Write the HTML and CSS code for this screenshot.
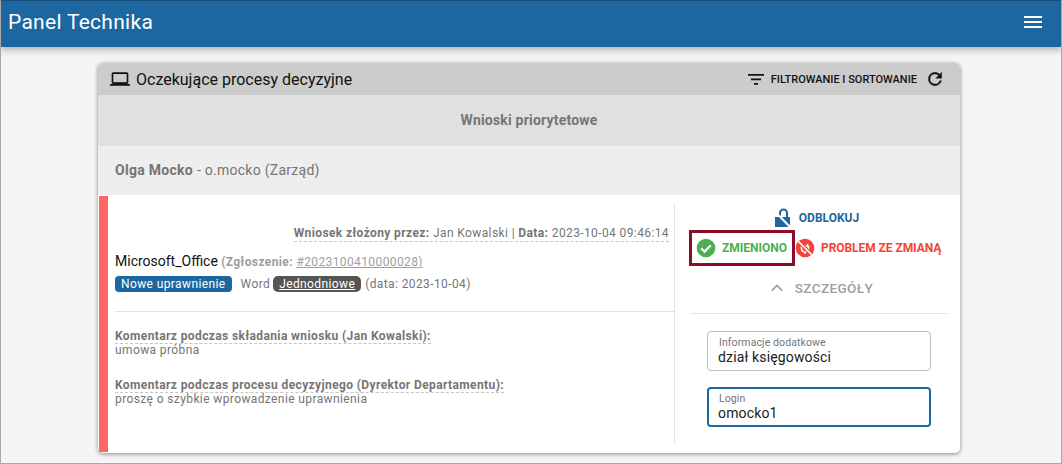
FILE: index.html
```html
<!DOCTYPE html>
<html lang="pl">
<head>
<meta charset="utf-8">
<title>Panel Technika</title>
<link rel="stylesheet" href="styles.css">
</head>
<body>
<div class="page">
  <header class="topbar">
    <span class="brand">Panel Technika</span>
    <svg class="menu" viewBox="0 0 18 12" width="18" height="12"><path d="M0 0h18v2H0zM0 5h18v2H0zM0 10h18v2H0z" fill="#fff"/></svg>
  </header>
  <main class="content">
    <section class="card">
      <div class="card-head">
        <svg class="laptop" viewBox="0 0 24 24" width="20" height="20"><path d="M20 18c1.100 0 2-.9 2-2V6c0-1.100-.9-2-2-2H4c-1.100 0-2 .9-2 2v10c0 1.100.9 2 2 2H0v2h24v-2h-4zM4 6h16v10H4V6z" fill="#111"/></svg>
        <h1 class="card-title">Oczekujące procesy decyzyjne</h1>
        <svg class="filter" viewBox="0 0 16 11" width="16" height="11"><path d="M0 0h16v1.700H0zM3 4.500h10v1.700H3zM6 9h4v1.700H6z" fill="#111"/></svg>
        <span class="filter-label">FILTROWANIE I SORTOWANIE</span>
        <svg class="refresh" viewBox="0 0 24 24" width="20" height="20"><path d="M17.650 6.350A7.960 7.960 0 0 0 12 4a8 8 0 1 0 7.730 10h-2.080A6 6 0 1 1 12 6c1.660 0 3.140.69 4.220 1.780L13 11h7V4l-2.350 2.350z" fill="#111" stroke="#111" stroke-width=".5"/></svg>
      </div>
      <div class="section-head">Wnioski priorytetowe</div>
      <div class="person"><b>Olga Mocko</b> - o.mocko (Zarząd)</div>
      <div class="request">
        <div class="request-main">
          <div class="meta-row"><span class="meta"><b>Wniosek złożony przez:</b> Jan Kowalski | <b>Data:</b> 2023-10-04 09:46:14</span></div>
          <div class="app-row"><span class="app-name">Microsoft_Office</span> <b>(Zgłoszenie:</b> <a class="ticket" href="#">#2023100410000028)</a></div>
          <div class="tags-row">
            <span class="tag tag-blue">Nowe uprawnienie</span>
            <span class="tag-word">Word</span>
            <span class="tag tag-dark"><u>Jednodniowe</u></span>
            <span class="tag-date">(data: 2023-10-04)</span>
          </div>
          <div class="comments">
            <div class="comment"><div><span class="comment-label">Komentarz podczas składania wniosku (Jan Kowalski):</span></div>umowa próbna</div>
            <div class="comment"><div><span class="comment-label">Komentarz podczas procesu decyzyjnego (Dyrektor Departamentu):</span></div>proszę o szybkie wprowadzenie uprawnienia</div>
          </div>
        </div>
        <div class="request-side">
          <div class="action-center">
            <a class="action action-blue" href="#">
              <svg viewBox="0 0 20 20" width="20" height="20"><path d="M2 9h15v10H2z" fill="#1c679f"/><path d="M7 10V5a3.500 3.500 0 0 1 7 0v5" fill="none" stroke="#1c679f" stroke-width="2"/><path d="M2 3.500L18.500 20.500" stroke="#fff" stroke-width="2"/></svg>
              ODBLOKUJ
            </a>
          </div>
          <div class="action-pair">
            <a class="action action-green" href="#">
              <svg viewBox="0 0 20 20" width="20" height="20"><circle cx="10" cy="10" r="9.300" fill="#4caf50"/><path d="M5.200 10.200l3.400 3.400 6.200-6.400" fill="none" stroke="#fff" stroke-width="2.200"/></svg>
              ZMIENIONO
            </a>
            <a class="action action-red" href="#">
              <svg viewBox="0 0 20 20" width="20" height="20"><circle cx="10" cy="10" r="9.300" fill="#f44336"/><path d="M7.500 6v2.500M12.500 6v2.500M6.500 8.500h7v2a3.500 3.500 0 0 1-7 0zM10 14v2" fill="none" stroke="#fff" stroke-width="1.600"/><path d="M3.500 3.500l13 13" stroke="#f44336" stroke-width="3.600"/><path d="M3.500 3.500l13 13" stroke="#fff" stroke-width="1.700"/></svg>
              PROBLEM ZE ZMIANĄ
            </a>
          </div>
          <div class="details">
            <svg viewBox="0 0 14 9" width="12" height="8"><path d="M1 7.500l6-6 6 6" fill="none" stroke="#9e9e9e" stroke-width="2"/></svg>
            SZCZEGÓŁY
          </div>
          <div class="fields">
            <div class="field"><span class="field-label">Informacje dodatkowe</span><span class="field-value">dział księgowości</span></div>
            <div class="field field-focus"><span class="field-label">Login</span><span class="field-value">omocko1</span></div>
          </div>
        </div>
      </div>
    </section>
  </main>
</div>
</body>
</html>
```

FILE: styles.css
```css
* { box-sizing: border-box; }
html, body { margin: 0; padding: 0; }
body {
  font-family: Roboto, "Liberation Sans", sans-serif;
  background: #f5f5f5;
  color: #757575;
}
.page {
  width: 1062px;
  height: 464px;
  overflow: hidden;
  background: #f5f5f5;
  border-left: 1px solid #a8a8a8;
  border-right: 1px solid #a8a8a8;
  border-bottom: 1px solid #a8a8a8;
}
.topbar {
  height: 47px;
  margin-left: -1px;
  margin-right: -1px;
  padding: 0 20px 4px 8px;
  display: flex;
  align-items: center;
  justify-content: space-between;
  background: #1c679f;
  border-top: 1px solid #174f7a;
  box-shadow: 0 2px 8px rgba(0, 0, 0, .35);
}
.brand { color: #fff; font-size: 21px; letter-spacing: .28px; }
.content { padding: 16px 101px 0 97px; }
.card {
  height: 390px;
  display: flex;
  flex-direction: column;
  border-radius: 5px;
  overflow: hidden;
  background: #fff;
  box-shadow: 0 1px 4px rgba(0, 0, 0, .45);
}
.card-head {
  height: 32px;
  flex: none;
  display: flex;
  align-items: center;
  padding: 0 15px 0 12px;
  background: #ccc;
  color: #111;
}
.laptop { flex: none; }
.card-title { margin: 0 auto 0 6px; font-size: 16px; font-weight: 400; }
.filter { margin-right: 7px; }
.filter-label { font-size: 11px; font-weight: 500; margin-right: 8px; }
.section-head {
  height: 51px;
  flex: none;
  display: flex;
  align-items: center;
  justify-content: center;
  padding-bottom: 2px;
  background: #e0e0e0;
  font-size: 14px;
  font-weight: 700;
  letter-spacing: .2px;
}
.person {
  height: 49px;
  flex: none;
  display: flex;
  align-items: center;
  gap: 4px;
  padding: 0 0 2px 17px;
  background: #eee;
  font-size: 14px;
  letter-spacing: .27px;
}
.request {
  flex: 1;
  display: flex;
  padding: 8px 0 9px;
  border-left: 9px solid #f66;
  margin: 1px 0 1px 1px;
  font-size: 12px;
  letter-spacing: .39px;
}
.request-main {
  width: 567px;
  flex: none;
  border-right: 1px solid #e0e0e0;
  padding-top: 22px;
}
.meta-row {
  display: flex;
  justify-content: flex-end;
  padding-right: 5px;
}
.meta { border-bottom: 1px dashed #c4c4c4; line-height: 15px; }
.app-row { margin: 10px 0 0 7px; line-height: 18px; }
.app-name { color: #111; font-size: 14px; letter-spacing: 0; }
.ticket { color: #9e9e9e; }
.app-row b { color: #9e9e9e; }
.tags-row {
  display: flex;
  align-items: center;
  margin: 5px 0 0 7px;
  height: 16px;
}
.tag {
  height: 16px;
  line-height: 16px;
  border-radius: 4px;
  color: #fff;
  padding: 0 6px;
}
.tag-blue { background: #1c679f; }
.tag-word { margin: 0 3px 0 9px; }
.tag-dark { background: #555; border-radius: 5px; }
.tag-date { margin-left: 4px; }
.comments {
  margin: 19px 0 0 7px;
  padding-top: 17px;
  border-top: 1px solid #e0e0e0;
}
.comment { line-height: 14px; margin-bottom: 21px; }
.comment div { height: 14px; }
.comment-label { font-weight: 700; border-bottom: 1px dashed #c4c4c4; display: inline-block; line-height: 13px; }
.request-side { flex: 1; min-width: 0; padding: 0 13px 0 14px; }
.action-center { display: flex; justify-content: center; height: 26px; align-items: center; padding: 2px 4px 0 0; }
.action {
  display: inline-flex;
  align-items: center;
  font-size: 12px;
  font-weight: 700;
  letter-spacing: 0;
  text-decoration: none;
}
.action-blue { color: #1c679f; gap: 6px; }
.action-green { color: #4caf50; border: 3px solid #8b0b2a; height: 36px; padding: 0 4px; width: 106px; gap: 6px; }
.action-red { color: #f44336; gap: 6px; letter-spacing: -.06px; }
.action-pair { display: flex; height: 36px; }
.details {
  display: flex;
  align-items: center;
  justify-content: center;
  gap: 12px;
  height: 47px;
  margin: 1px 0 0 2px;
  padding: 0 0 5px 6px;
  font-size: 13.500px;
  font-weight: 500;
  color: #9e9e9e;
  border-bottom: 1px solid #e0e0e0;
}
.fields { padding: 17px 16px 0 18px; display: flex; flex-direction: column; gap: 16px; }
.field {
  height: 40px;
  border: 1px solid #bdbdbd;
  border-radius: 4px;
  padding: 4px 10px 0;
  display: flex;
  flex-direction: column;
}
.field-focus { border: 2px solid #1c679f; padding: 3px 9px 0; }
.field-label { font-size: 10.500px; line-height: 13px; padding-left: 1px; color: #757575; letter-spacing: .1px; }
.field-value { font-size: 14px; line-height: 17px; color: #212121; letter-spacing: .15px; }
```
